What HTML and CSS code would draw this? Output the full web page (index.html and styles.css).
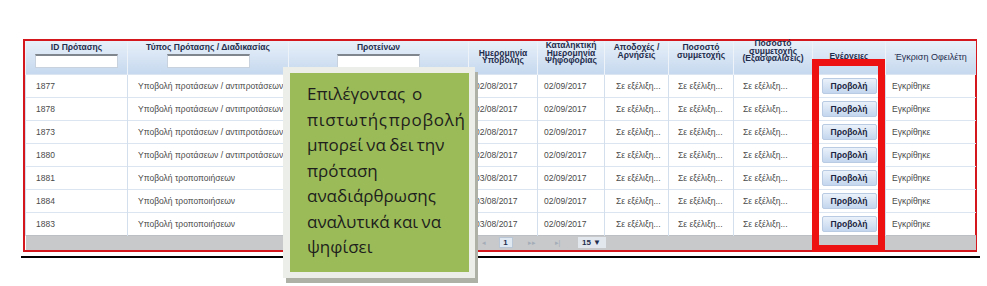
FILE: index.html
```html
<!DOCTYPE html>
<html lang="el">
<head>
    <meta charset="UTF-8">
    <meta name="viewport" content="width=device-width, initial-scale=1.0">
    <title>Προτάσεις αναδιάρθρωσης</title>
    <link rel="stylesheet" href="styles.css">
</head>
<body>
    <div class="page">
        <div class="frame">
            <table class="grid">
                <colgroup>
                    <col style="width:102px">
                    <col style="width:161px">
                    <col style="width:180px">
                    <col style="width:69px">
                    <col style="width:67px">
                    <col style="width:64px">
                    <col style="width:65px">
                    <col style="width:79px">
                    <col style="width:73px">
                    <col style="width:90px">
                </colgroup>
                <thead>
                    <tr>
                        <th class="filter"><span>ID Πρότασης</span><div class="box"></div></th>
                        <th class="filter"><span>Τύπος Πρότασης / Διαδικασίας</span><div class="box"></div></th>
                        <th class="filter"><span>Προτείνων</span><div class="box"></div></th>
                        <th>Ημερομηνία<br>Υποβολής</th>
                        <th class="top t1">Καταληκτική<br>Ημερομηνία<br>Ψηφοφορίας</th>
                        <th class="top t3">Αποδοχές /<br>Αρνήσεις</th>
                        <th class="top t3">Ποσοστό<br>συμμετοχής</th>
                        <th class="top"><span class="up">Ποσοστό<br>συμμετοχής<br>(Εξασφαλίσεις)</span></th>
                        <th class="top t12">Ενέργειες</th>
                        <th class="plain">Έγκριση Οφειλέτη</th>
                    </tr>
                </thead>
                <tbody>
                    <tr><td>1877</td><td>Υποβολή προτάσεων / αντιπροτάσεων</td><td></td><td>02/08/2017</td><td>02/09/2017</td><td>Σε εξέλιξη...</td><td>Σε εξέλιξη...</td><td>Σε εξέλιξη...</td><td><span class="view">Προβολή</span></td><td>Εγκρίθηκε</td></tr>
                    <tr><td>1878</td><td>Υποβολή προτάσεων / αντιπροτάσεων</td><td></td><td>02/08/2017</td><td>02/09/2017</td><td>Σε εξέλιξη...</td><td>Σε εξέλιξη...</td><td>Σε εξέλιξη...</td><td><span class="view">Προβολή</span></td><td>Εγκρίθηκε</td></tr>
                    <tr><td>1873</td><td>Υποβολή προτάσεων / αντιπροτάσεων</td><td></td><td>02/08/2017</td><td>02/09/2017</td><td>Σε εξέλιξη...</td><td>Σε εξέλιξη...</td><td>Σε εξέλιξη...</td><td><span class="view">Προβολή</span></td><td>Εγκρίθηκε</td></tr>
                    <tr><td>1880</td><td>Υποβολή προτάσεων / αντιπροτάσεων</td><td></td><td>02/08/2017</td><td>02/09/2017</td><td>Σε εξέλιξη...</td><td>Σε εξέλιξη...</td><td>Σε εξέλιξη...</td><td><span class="view">Προβολή</span></td><td>Εγκρίθηκε</td></tr>
                    <tr><td>1881</td><td>Υποβολή τροποποιήσεων</td><td></td><td>03/08/2017</td><td>02/09/2017</td><td>Σε εξέλιξη...</td><td>Σε εξέλιξη...</td><td>Σε εξέλιξη...</td><td><span class="view">Προβολή</span></td><td>Εγκρίθηκε</td></tr>
                    <tr><td>1884</td><td>Υποβολή τροποποιήσεων</td><td></td><td>03/08/2017</td><td>02/09/2017</td><td>Σε εξέλιξη...</td><td>Σε εξέλιξη...</td><td>Σε εξέλιξη...</td><td><span class="view">Προβολή</span></td><td>Εγκρίθηκε</td></tr>
                    <tr><td>1883</td><td>Υποβολή τροποποιήσεων</td><td></td><td>03/08/2017</td><td>02/09/2017</td><td>Σε εξέλιξη...</td><td>Σε εξέλιξη...</td><td>Σε εξέλιξη...</td><td><span class="view">Προβολή</span></td><td>Εγκρίθηκε</td></tr>
                </tbody>
                <tfoot>
                    <tr>
                        <td colspan="10">
                            <div class="pager">
                                <span class="pg">|&#9666;</span>
                                <span class="pg">&#9666;</span>
                                <span class="pg current">1</span>
                                <span class="pg next">&#9656;&#9656;</span>
                                <span class="pg next">&#9656;|</span>
                                <span class="size">15 &#9660;</span>
                            </div>
                        </td>
                    </tr>
                </tfoot>
            </table>
        </div>
        <div class="rule"></div>

        <!-- annotation overlays -->
        <div class="focus"></div>
        <div class="note">
            <div class="note-body">
                Επιλέγοντας&nbsp; ο<br>
                <span class="wide">πιστωτής προβολή</span><br>
                μπορεί να δει την<br>
                πρόταση<br>
                αναδιάρθρωσης<br>
                αναλυτικά και να<br>
                ψηφίσει
            </div>
        </div>
    </div>
</body>
</html>
```

FILE: styles.css
```css
body {
    margin: 0;
    background: #fff;
    font-family: "Liberation Sans", Arial, sans-serif;
}

.page {
    position: relative;
    width: 987px;
    height: 286px;
    padding-top: 39px;
    box-sizing: border-box;
    overflow: hidden;
}

.frame {
    margin-left: 23px;
    width: 950px;
    border: 2px solid #d4161d;
}

.grid {
    width: 950px;
    table-layout: fixed;
    border-collapse: collapse;
}

/* header */
.grid th {
    box-sizing: border-box;
    height: 33px;
    padding: 0;
    background: linear-gradient(#e8f0f9, #c5d8ee);
    color: #1f2d4d;
    font-size: 8.5px;
    font-weight: bold;
    line-height: 7.5px;
    text-align: center;
    vertical-align: middle;
    border-left: 1px solid #eef3fa;
}

.grid th.top {
    vertical-align: top;
}

.grid th.t1 {
    padding-top: 1px;
}

.grid th.t3 {
    padding-top: 3px;
}

.grid th.t12 {
    padding-top: 12px;
}

.up {
    display: block;
    margin-top: -1px;
}

.grid th.plain {
    font-weight: normal;
    font-size: 9px;
    color: #1f2d4d;
}

.grid th.filter {
    vertical-align: top;
    padding-top: 2px;
}

.filter span {
    display: block;
    line-height: 9px;
}

.filter .box {
    width: 83px;
    height: 14px;
    margin: 2px auto 0;
    box-sizing: border-box;
    background: #fff;
    border: 1px solid #c8d2de;
    border-top: 2px solid #80868e;
}

/* body */
.grid td {
    height: 22px;
    padding: 0 0 0 9px;
    font-size: 8.5px;
    color: #4a4a4a;
    white-space: nowrap;
    overflow: hidden;
    border-top: 1px solid #dbe5f1;
    border-left: 1px solid #d3dfec;
}

.grid td:nth-child(1),
.grid td:nth-child(2) {
    padding-left: 10px;
}

.grid td:nth-child(4),
.grid td:nth-child(5) {
    padding-left: 6px;
}

.grid td:nth-child(6) {
    padding-left: 11px;
}

.grid td:nth-child(9) {
    padding: 0;
    text-align: center;
}

.grid td:nth-child(10) {
    padding-left: 6px;
}

.view {
    display: block;
    width: 55px;
    height: 16px;
    margin: 0 auto;
    box-sizing: border-box;
    border: 1px solid #b8cbe2;
    border-radius: 2px;
    background: linear-gradient(#eaf1fa, #c3d6ee);
    color: #1a2440;
    font-weight: bold;
    font-size: 8.5px;
    line-height: 14px;
    text-align: center;
}

/* footer / pager */
.grid tfoot td {
    height: 14px;
    padding: 0;
    background: #c8c9cb;
    border-top: 1px solid #bcbfc3;
    border-left: none;
}

.pager {
    display: flex;
    align-items: center;
    gap: 8px;
    padding-left: 419px;
    font-size: 8px;
}

.pg {
    width: 14px;
    text-align: center;
    color: #a3acb7;
    font-size: 7px;
}

.pg.next {
    margin-left: 4px;
}

.pg.current {
    height: 11px;
    line-height: 9px;
    background: #dfe7f1;
    border: 1px solid #b9c6d6;
    box-sizing: border-box;
    color: #1f2d4d;
    font-weight: bold;
    font-size: 8px;
}

.size {
    margin-left: 5px;
    width: 28px;
    height: 11px;
    line-height: 11px;
    text-align: center;
    background: #e2e7ed;
    color: #1f2d4d;
    font-weight: bold;
    font-size: 8px;
}

.rule {
    margin: 4px 0 0 21px;
    width: 959px;
    height: 2px;
    background: #000;
}

/* overlays */
.focus {
    position: absolute;
    left: 812px;
    top: 59px;
    width: 73px;
    height: 193px;
    box-sizing: border-box;
    border: 7px solid #ee1111;
}

.note {
    position: absolute;
    left: 283px;
    top: 67px;
    width: 192px;
    height: 211px;
    box-sizing: border-box;
    padding: 6px 6px 6px 7px;
    background: #eceeea;
    box-shadow: 3px 5px 0 #aeb2a6;
}

.note-body {
    height: 100%;
    box-sizing: border-box;
    padding: 8px 0 0 17px;
    background: #9bbb59;
    color: #1e1e1c;
    font-family: "Open Sans", sans-serif;
    font-size: 17px;
    line-height: 25.5px;
    white-space: nowrap;
    word-spacing: -1px;
}

.wide {
    letter-spacing: 0.7px;
    word-spacing: -4px;
}
```
